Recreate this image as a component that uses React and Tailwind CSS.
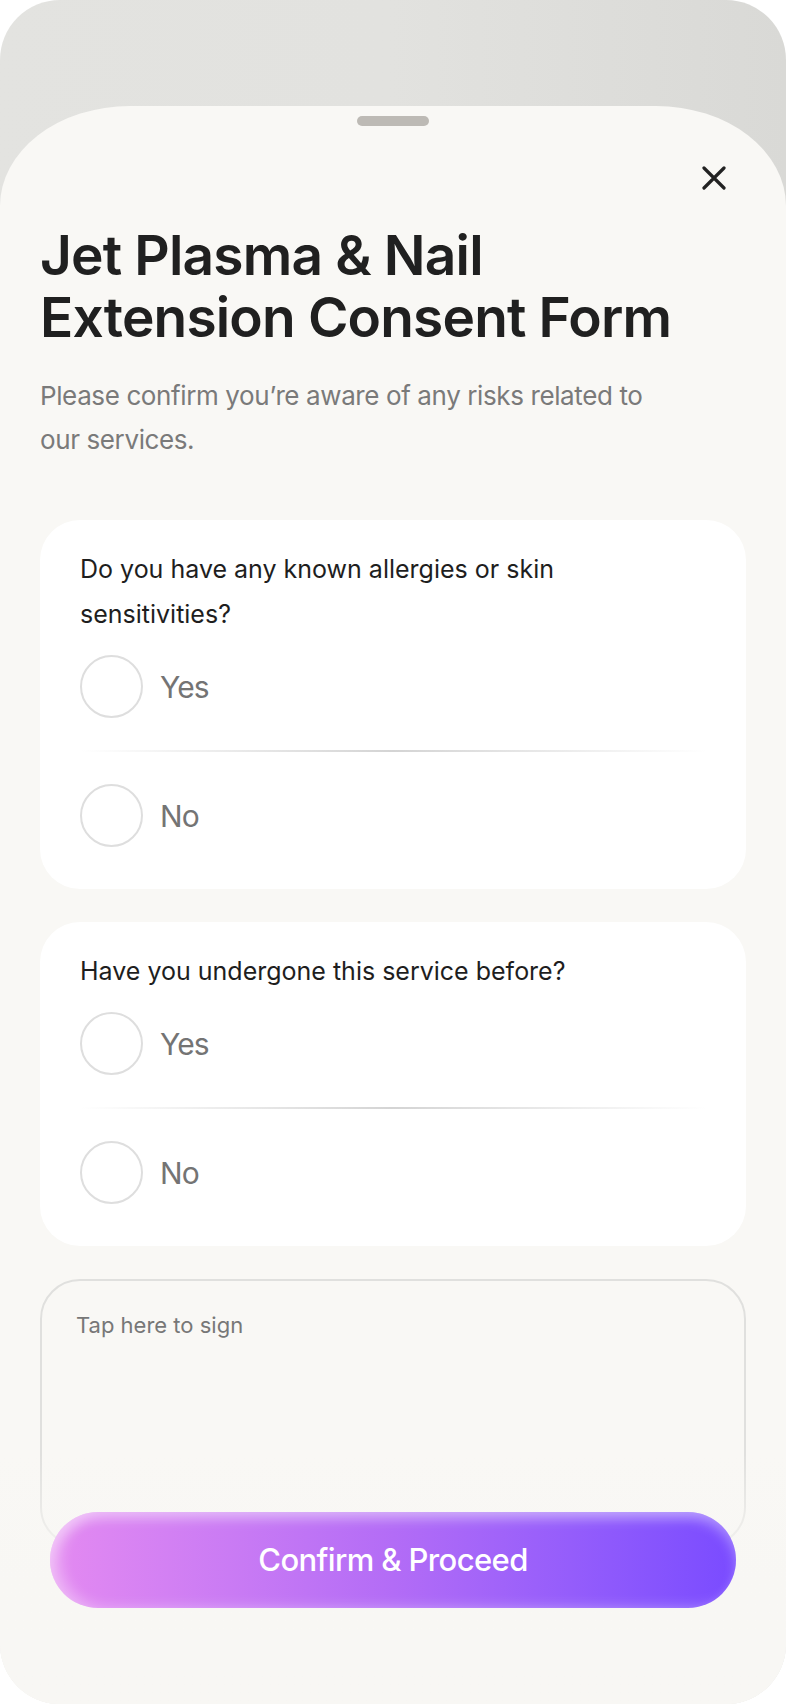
import React, { useState } from 'react';

const questions = [
  { id: 'allergies', text: 'Do you have any known allergies or skin sensitivities?' },
  { id: 'before', text: 'Have you undergone this service before?' },
];

function CloseIcon() {
  return (
    <svg width="24" height="24" viewBox="0 0 24 24" fill="none">
      <path d="M2 2L22 22M22 2L2 22" stroke="#222222" strokeWidth="3.2" strokeLinecap="round" />
    </svg>
  );
}

function Option({ label, checked, onClick }) {
  return (
    <button onClick={onClick} className="flex items-center gap-[17px] text-left">
      <span
        className={`flex h-[63px] w-[63px] items-center justify-center rounded-full border-2 ${
          checked ? 'border-[#8b5cf6]' : 'border-[#dedede]'
        }`}
      >
        {checked && <span className="h-[31px] w-[31px] rounded-full bg-[#8b5cf6]" />}
      </span>
      <span className="text-[30px] leading-[40px] tracking-[-0.03em] text-[#747474]">{label}</span>
    </button>
  );
}

function QuestionCard({ q, value, onChange }) {
  return (
    <div className="rounded-[40px] bg-white pb-[42px] pl-[40px] pr-[40px] pt-[27px]">
      <p className="max-w-[540px] text-[25px] leading-[45px] text-[#1e1e1e]">{q.text}</p>
      <div className="mt-[18px]">
        <Option label="Yes" checked={value === 'yes'} onClick={() => onChange('yes')} />
      </div>
      <div className="my-[32px] h-[2px] bg-gradient-to-r from-[#f2f2f2]/0 via-[#d4d4d4] to-[#f2f2f2]/0" />
      <Option label="No" checked={value === 'no'} onClick={() => onChange('no')} />
    </div>
  );
}

export default function App() {
  const [answers, setAnswers] = useState({});

  return (
    <div className="min-h-screen bg-white" style={{ fontFamily: 'Inter, "Noto Sans", sans-serif' }}>
      <div className="flex h-[1704px] w-[786px] flex-col overflow-hidden rounded-[60px] bg-gradient-to-r from-[#e3e3e0] via-[#e2e2df] to-[#d9d9d6]">
        {/* Sheet */}
        <div className="relative mt-[106px] flex flex-1 flex-col rounded-tl-[130px_100px] rounded-tr-[130px_100px] bg-[#f9f8f5] px-[40px]">
          <div className="mx-auto mt-[10px] h-[10px] w-[72px] rounded-full bg-[#bdbab5]" />

          <div className="mt-[40px] flex justify-end pr-[20px]">
            <button title="Close">
              <CloseIcon />
            </button>
          </div>

          <h1 className="mt-[34px] text-[55px] font-semibold leading-[62px] tracking-[-0.015em] text-[#202020]">
            Jet Plasma &amp; Nail
            <br />
            Extension Consent Form
          </h1>

          <p className="mt-[26px] max-w-[640px] text-[26px] leading-[44px] tracking-[-0.015em] text-[#7a7a7a]">
            Please confirm you’re aware of any risks related to our services.
          </p>

          <div className="mt-[58px] flex flex-col gap-[33px]">
            {questions.map((q) => (
              <QuestionCard
                key={q.id}
                q={q}
                value={answers[q.id]}
                onChange={(v) => setAnswers({ ...answers, [q.id]: v })}
              />
            ))}

            <div className="h-[268px] rounded-[40px] border-2 border-[#e0e0de] pl-[34px] pt-[30px]">
              <p className="text-[22px] leading-[28px] text-[#777777]">Tap here to sign</p>
            </div>
          </div>

          {/* bottom fade */}
          <div className="pointer-events-none absolute inset-x-0 bottom-0 h-[250px] bg-gradient-to-b from-[#f9f8f5]/0 via-[#f8f7f4]/95 to-[#f8f7f4]" />

          <button className="absolute bottom-[96px] left-[50px] right-[50px] h-[96px] rounded-full bg-gradient-to-r from-[#e48af1] via-[#b36cf6] to-[#7a4bff] shadow-[inset_10px_0_14px_rgba(255,255,255,0.35),inset_0_8px_12px_rgba(255,255,255,0.3)]">
            <span className="text-[31px] font-medium tracking-[-0.02em] text-white">Confirm &amp; Proceed</span>
          </button>
        </div>
      </div>
    </div>
  );
}
